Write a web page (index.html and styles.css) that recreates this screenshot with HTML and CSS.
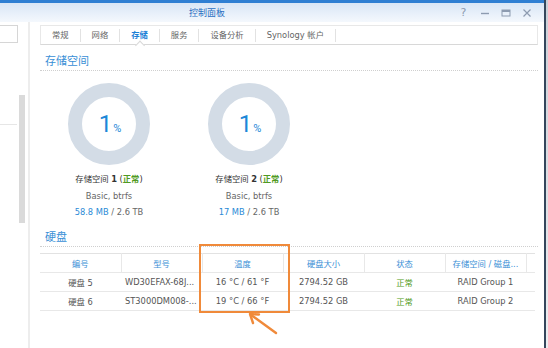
FILE: index.html
```html
<!DOCTYPE html>
<html lang="zh-CN">
  <head>
    <meta charset="UTF-8" />
    <meta name="viewport" content="width=device-width, initial-scale=1.0" />
    <title>控制面板</title>
    <link rel="stylesheet" href="styles.css">
  </head>
  <body>
    <div class="window">
      <div class="titlebar">
        <span class="title">控制面板</span>
        <div class="controls">
          <span class="ctl help">?</span>
          <span class="ctl">
            <svg width="10" height="10" viewBox="0 0 10 10"><path d="M1 5.5h8" stroke="#8d9bb0" stroke-width="1.4"/></svg>
          </span>
          <span class="ctl">
            <svg width="10" height="10" viewBox="0 0 10 10"><rect x="1" y="2" width="8" height="6" fill="none" stroke="#8d9bb0" stroke-width="1"/><path d="M1 3h8" stroke="#8d9bb0" stroke-width="2"/></svg>
          </span>
          <span class="ctl">
            <svg width="10" height="10" viewBox="0 0 10 10"><path d="M1.5 1.5l7 7M8.5 1.5l-7 7" stroke="#8d9bb0" stroke-width="1.2"/></svg>
          </span>
        </div>
      </div>

      <div class="body">
        <div class="sidebar">
          <div class="search"></div>
          <div class="nav">
            <div class="list"></div>
            <div class="scroll"></div>
          </div>
        </div>

        <div class="main">
          <div class="tabs">
            <span class="tab">常规</span>
            <span class="tab">网络</span>
            <span class="tab active">存储</span>
            <span class="tab">服务</span>
            <span class="tab">设备分析</span>
            <span class="tab">Synology 帐户</span>
          </div>

          <h2 class="section">存储空间</h2>
          <div class="volumes">
            <div class="volume">
              <div class="donut"><span class="usage">1<small>%</small></span></div>
              <div class="name">存储空间 <b>1</b> (<b class="ok">正常</b>)</div>
              <div class="meta">Basic, btrfs</div>
              <div class="meta"><span class="used">58.8 MB</span> / 2.6 TB</div>
            </div>
            <div class="volume">
              <div class="donut"><span class="usage">1<small>%</small></span></div>
              <div class="name">存储空间 <b>2</b> (<b class="ok">正常</b>)</div>
              <div class="meta">Basic, btrfs</div>
              <div class="meta"><span class="used">17 MB</span> / 2.6 TB</div>
            </div>
          </div>

          <h2 class="section">硬盘</h2>
          <div class="disks">
            <table>
              <thead>
                <tr>
                  <th>编号</th>
                  <th>型号</th>
                  <th>温度</th>
                  <th>硬盘大小</th>
                  <th>状态</th>
                  <th>存储空间 / 磁盘...</th>
                  <th class="filler"></th>
                </tr>
              </thead>
              <tbody>
                <tr>
                  <td>硬盘 5</td>
                  <td class="model" title="WD30EFAX-68JH4N0">WD30EFAX-68J...</td>
                  <td>16 °C / 61 °F</td>
                  <td>2794.52 GB</td>
                  <td class="ok">正常</td>
                  <td>RAID Group 1</td>
                  <td></td>
                </tr>
                <tr>
                  <td>硬盘 6</td>
                  <td class="model" title="ST3000DM008-2DM166">ST3000DM008-...</td>
                  <td>19 °C / 66 °F</td>
                  <td>2794.52 GB</td>
                  <td class="ok">正常</td>
                  <td>RAID Group 2</td>
                  <td></td>
                </tr>
              </tbody>
            </table>
            <div class="highlight"></div>
            <svg class="arrow" width="45" height="35" viewBox="0 0 45 35">
              <path d="M36 28L10.5 9.5" stroke="#f08a3a" stroke-width="2.4" stroke-linecap="round" fill="none"/>
              <polyline points="13,18 10,9 19,9.5" stroke="#f08a3a" stroke-width="2.4" stroke-linecap="round" stroke-linejoin="round" fill="none"/>
            </svg>
          </div>
        </div>
      </div>
    </div>
    <div class="edge"></div>
  </body>
</html>
```

FILE: styles.css
```css
* {
  box-sizing: border-box;
}

body {
  margin: 0;
  width: 548px;
  height: 348px;
  overflow: hidden;
  display: flex;
  background: #fff;
  color: #555;
  font-family: "DejaVu Sans", "Noto Sans CJK SC", sans-serif;
  font-size: 8.3px;
}

div.window {
  width: 544px;
  display: flex;
  flex-direction: column;
  border-top: 3px solid #2f7fd3;
}
div.edge {
  width: 4px;
  border-left: 2px solid #34465c;
  background: linear-gradient(#c9d0d8, #eceef1);
}

/* title bar */
div.titlebar {
  height: 19px;
  display: flex;
  align-items: center;
  padding: 0 7px 0 189px;
  background: linear-gradient(#d9e6f6, #f4f8fd);
}
span.title {
  color: #2a6fc2;
  font-size: 9px;
}
div.controls {
  margin-left: auto;
  display: flex;
}
span.ctl {
  width: 21px;
  height: 12px;
  display: flex;
  align-items: center;
  justify-content: center;
}
span.help {
  color: #8d9bb0;
  font-size: 11px;
}

/* body */
div.body {
  flex: 1;
  display: flex;
}

div.sidebar {
  width: 30px;
  border-right: 2px solid #ededed;
  padding-top: 3px;
  overflow: hidden;
}
div.search {
  width: 28px;
  height: 18px;
  margin-left: -10px;
  border: 1px solid #d6d6d6;
  background: #fff;
}
div.nav {
  display: flex;
  gap: 2px;
}
div.list {
  width: 17px;
  height: 82px;
  border-bottom: 1px solid #e6e6e6;
}
div.scroll {
  width: 6px;
  height: 128px;
  margin-top: 52px;
  background: #dadada;
}

div.main {
  flex: 1;
  padding: 3px 6px 0 10px;
}

/* tabs */
div.tabs {
  height: 20px;
  display: flex;
  align-items: center;
  border: 1px solid #e8e8e8;
  border-bottom-color: #d8d8d8;
}
span.tab {
  padding: 0 11px;
  line-height: 13px;
  color: #666;
  border-right: 1px solid #e2e2e2;
}
span.tab.active {
  position: relative;
  color: #1b80d6;
  font-weight: bold;
}
span.tab.active::after {
  content: "";
  position: absolute;
  left: 50%;
  bottom: -7px;
  width: 6px;
  height: 6px;
  background: #fff;
  border-left: 1px solid #d8d8d8;
  border-top: 1px solid #d8d8d8;
  transform: translateX(-50%) rotate(45deg);
}

/* sections */
h2.section {
  margin: 10px 0 0;
  padding: 0 0 1px 5px;
  font-size: 11px;
  font-weight: normal;
  line-height: 14px;
  color: #3a8fd6;
  border-bottom: 1px dotted #cfcfcf;
}

div.volumes {
  display: flex;
  gap: 2px;
  margin-top: 12px;
}
div.volume {
  width: 138px;
  display: flex;
  flex-direction: column;
  align-items: center;
}
div.donut {
  width: 82px;
  height: 82px;
  border-radius: 50%;
  border: 14px solid #d3dce6;
  display: flex;
  align-items: center;
  justify-content: center;
}
span.usage {
  color: #1d88d8;
  font-family: Roboto, sans-serif;
  font-weight: 400;
  font-size: 24px;
  margin-left: 2px;
}
span.usage small {
  font-size: 11px;
  margin-left: 1px;
}
div.name {
  margin-top: 6px;
  line-height: 16.5px;
  color: #333;
}
div.meta {
  line-height: 16.5px;
  color: #666;
}
span.used {
  color: #2b8ad6;
}
.ok {
  color: #4f9a22;
}
div.name b {
  font-weight: bold;
}

/* disks table */
div.disks {
  position: relative;
  margin-top: 6px;
}
table {
  width: 495px;
  border-collapse: collapse;
  table-layout: fixed;
}
th,
td {
  width: 81px;
  height: 19px;
  padding: 0 4px;
  text-align: center;
  white-space: nowrap;
  overflow: hidden;
  border-bottom: 1px solid #e8e8e8;
}
th.filler {
  width: 9px;
  border-right: none;
}
th {
  font-weight: normal;
  color: #3a8fd6;
  border-top: 1px solid #e2e2e2;
  border-right: 1px solid #e8e8e8;
}
td.model {
  text-align: left;
}

div.highlight {
  position: absolute;
  left: 159px;
  top: -9px;
  width: 91px;
  height: 69px;
  border: 2px solid #f08a3a;
}
svg.arrow {
  position: absolute;
  left: 200px;
  top: 52px;
}
```
